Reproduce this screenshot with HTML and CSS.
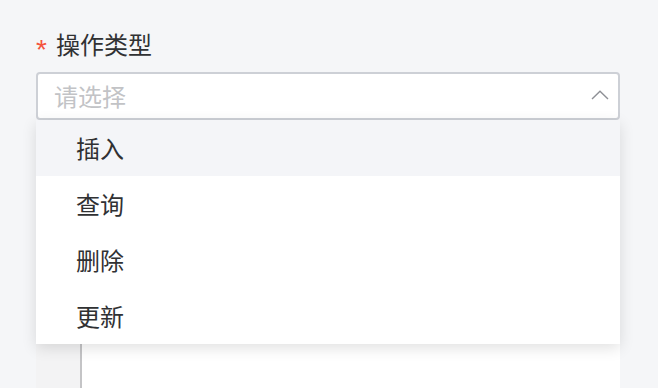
FILE: index.html
```html
<!DOCTYPE html>
<html lang="zh">
<head>
<meta charset="utf-8">
<link rel="stylesheet" href="styles.css">
</head>
<body>
<div class="form">
  <div class="label"><span class="req">*</span><span class="label-text">操作类型</span></div>
  <div class="select-wrap">
    <div class="select">
      <span class="placeholder">请选择</span>
      <svg class="chev" width="18" height="10" viewBox="0 0 18 10"><polyline points="1,9 9,1.2 17,9" fill="none" stroke="#8e9096" stroke-width="1.4"/></svg>
    </div>
    <ul class="menu">
      <li class="item hover">插入</li>
      <li class="item">查询</li>
      <li class="item">删除</li>
      <li class="item">更新</li>
    </ul>
  </div>
  <div class="editor">
    <div class="gutter"></div>
    <div class="code"></div>
  </div>
</div>
</body>
</html>
```
FILE: styles.css
```css
html, body {
  margin: 0;
  padding: 0;
  background: #f5f6f8;
  font-family: "Noto Sans CJK SC", "Noto Sans", sans-serif;
  overflow: hidden;
}
.form {
  width: 584px;
  padding: 28px 0 0 36px;
}
.label {
  display: flex;
  align-items: center;
  height: 32px;
  margin-bottom: 12px;
}
.req {
  color: #f4533d;
  font-family: "Liberation Sans", sans-serif;
  font-size: 28px;
  width: 20px;
  line-height: 32px;
  position: relative;
  top: 6px;
}
.label-text {
  font-size: 24px;
  color: #303133;
  line-height: 32px;
}
.select-wrap {
  position: relative;
}
.select {
  box-sizing: border-box;
  height: 48px;
  border: 2px solid #cdd0d6;
  border-radius: 4px;
  background: #fff;
  display: flex;
  align-items: center;
  justify-content: space-between;
  padding: 0 9px 0 16px;
}
.placeholder {
  font-size: 24px;
  color: #c2c3c6;
  line-height: 32px;
}
.chev {
  display: block;
  margin-top: -2px;
}
.menu {
  position: absolute;
  left: 0;
  right: 0;
  top: 100%;
  margin: 0;
  padding: 0;
  list-style: none;
  background: #fff;
  box-shadow: 0 4px 14px rgba(0, 0, 0, 0.12);
  z-index: 2;
}
.item {
  height: 56px;
  line-height: 56px;
  padding-left: 40px;
  font-size: 24px;
  color: #303133;
}
.item.hover {
  background: #f4f5f8;
}
.editor {
  margin-top: 10px;
  height: 258px;
  display: flex;
  background: #fff;
}
.gutter {
  width: 44px;
  background: #f3f3f4;
  border-right: 2px solid #c4c4c6;
}
.code {
  flex: 1;
  background: #fff;
}
```
